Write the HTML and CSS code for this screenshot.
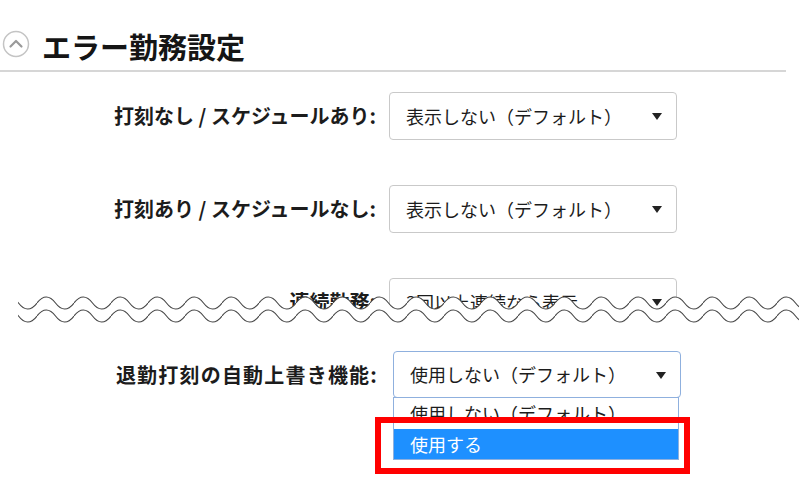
FILE: index.html
```html
<!DOCTYPE html>
<html lang="ja">
<head>
  <meta charset="UTF-8">
  <meta name="viewport" content="width=device-width, initial-scale=1.0">
  <title>エラー勤務設定</title>
  <link rel="stylesheet" href="styles.css">
</head>
<body>
  <div class="section-header">
    <svg class="toggle-icon" width="28" height="28" viewBox="0 0 28 28">
      <circle cx="14" cy="14" r="12.5" fill="#fff" stroke="#c4c4c4" stroke-width="1.5"/>
      <path d="M8.5 16.5 L14 11 L19.5 16.5" fill="none" stroke="#9a9a9a" stroke-width="2.2" stroke-linecap="round" stroke-linejoin="round"/>
    </svg>
    <h2>エラー勤務設定</h2>
  </div>

  <div class="settings">
    <div class="row">
      <label>打刻なし / スケジュールあり:</label>
      <div class="select">表示しない（デフォルト）<span class="arrow"></span></div>
    </div>

    <div class="row">
      <label>打刻あり / スケジュールなし:</label>
      <div class="select">表示しない（デフォルト）<span class="arrow"></span></div>
    </div>

    <!-- torn part of the screenshot -->
    <div class="torn">
      <div class="row">
        <label>連続勤務:</label>
        <div class="select">3回以上連続なら表示<span class="arrow"></span></div>
      </div>
      <svg class="tear" width="799" height="40" viewBox="0 0 799 40">
        <defs>
          <pattern id="wave" width="37" height="40" patternUnits="userSpaceOnUse">
            <path d="M0 10 C6 2 12.5 2 18.5 10 C24.5 18 31 18 37 10 V40 H0 Z" fill="#fff"/>
            <path d="M0 10 C6 2 12.5 2 18.5 10 C24.5 18 31 18 37 10" fill="none" stroke="#444" stroke-width="1.1"/>
            <path d="M0 23 C6 15 12.5 15 18.5 23 C24.5 31 31 31 37 23" fill="none" stroke="#444" stroke-width="1.1"/>
          </pattern>
        </defs>
        <rect x="18" y="0" width="781" height="40" fill="url(#wave)"/>
      </svg>
    </div>

    <div class="row row-wide">
      <label class="label-kanji">退勤打刻の自動上書き機能:</label>
      <div class="select-wrap">
        <div class="select open">使用しない（デフォルト）<span class="arrow"></span></div>
        <ul class="options">
          <li>使用しない（デフォルト）</li>
          <li class="active">使用する</li>
        </ul>
        <div class="highlight-box"></div>
      </div>
    </div>
  </div>
</body>
</html>
```

FILE: styles.css
```css
body {
  margin: 0;
  min-height: 485px;
  font-family: "Noto Sans CJK JP", "Noto Sans", sans-serif;
  color: #1c1c1c;
  background-color: #fff;
}

.section-header {
  display: flex;
  align-items: center;
  height: 48px;
  padding: 22px 0 0 2px;
  margin-right: 13px;
  border-bottom: 2px solid #d6d6d6;
}

.toggle-icon {
  margin-right: 12px;
  margin-top: -4px;
}

.section-header h2 {
  margin: 0;
  font-size: 29px;
  font-weight: bold;
  line-height: 1.2;
  color: #151515;
}

.settings {
  padding-top: 20px;
  padding-bottom: 90px;
}

.row {
  display: grid;
  grid-template-columns: 376px 288px;
  column-gap: 13px;
  align-items: center;
  margin-bottom: 45px;
}

.row-wide {
  grid-template-columns: 378px 288px;
  column-gap: 15px;
  margin-bottom: 0;
}

.row label {
  text-align: right;
  font-size: 20px;
  font-weight: bold;
  line-height: 1.3;
  white-space: nowrap;
}

.row label.label-kanji {
  letter-spacing: 1.2px;
}

.select {
  position: relative;
  box-sizing: border-box;
  height: 48px;
  padding: 0 0 0 16px;
  border: 1px solid #c9c9c9;
  border-radius: 4px;
  font-size: 18px;
  line-height: 46px;
  white-space: nowrap;
  overflow: hidden;
}

.select .arrow {
  position: absolute;
  right: 14px;
  top: 20px;
  width: 0;
  height: 0;
  border-left: 5px solid transparent;
  border-right: 5px solid transparent;
  border-top: 7px solid #222;
}

.torn {
  position: relative;
  margin-bottom: 25px;
}

.torn .row {
  margin-bottom: 0;
}

.tear {
  position: absolute;
  left: 0;
  top: 15px;
}

.select-wrap {
  position: relative;
}

.select.open {
  height: 47px;
  line-height: 45px;
  border-color: #8fb0de;
}

.options {
  position: absolute;
  left: 0;
  top: 46px;
  width: 284px;
  margin: 0;
  padding: 0;
  list-style: none;
  border: 1px solid #8fb0de;
  background-color: #fff;
  font-size: 18px;
}

.options li {
  height: 30px;
  padding-left: 16px;
  line-height: 30px;
  white-space: nowrap;
}

.options li:first-child {
  height: 31px;
}

.options li.active {
  background-color: #1e90ff;
  color: #fff;
}

.highlight-box {
  position: absolute;
  left: -18px;
  top: 66px;
  width: 315px;
  height: 57px;
  box-sizing: border-box;
  border: 6px solid #f00;
}
```
